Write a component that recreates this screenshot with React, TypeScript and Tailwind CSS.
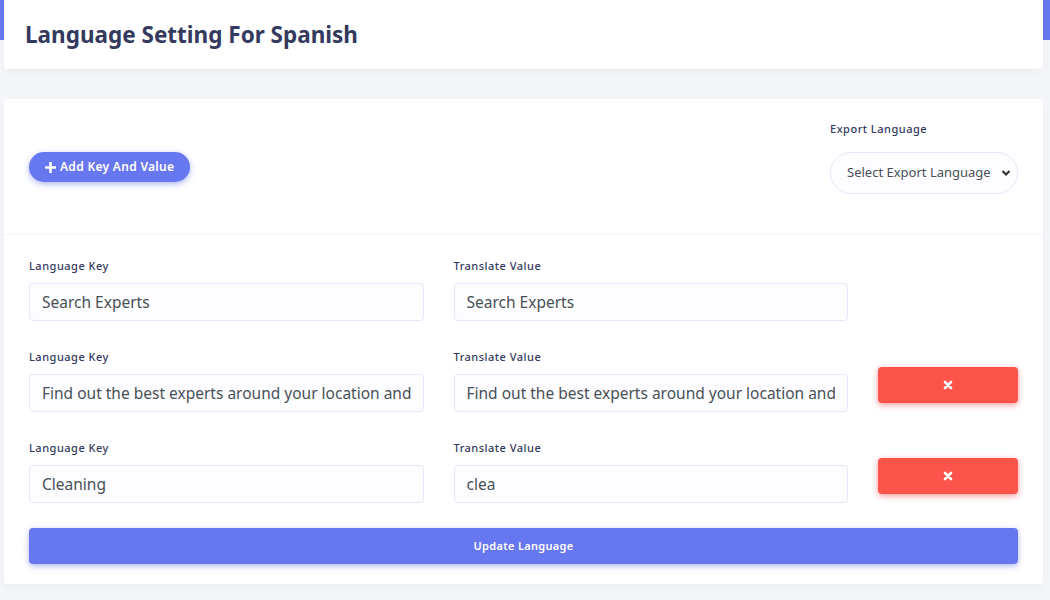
const ROWS = [
  { key: "Search Experts", value: "Search Experts", removable: false },
  {
    key: "Find out the best experts around your location and hire them",
    value: "Find out the best experts around your location and hire them",
    removable: true,
  },
  { key: "Cleaning", value: "clea", removable: true },
];

function TimesIcon() {
  return (
    <svg width="10" height="10" viewBox="0 0 10 10" aria-hidden>
      <path d="M2 2 L8 8 M8 2 L2 8" stroke="#fff" strokeWidth="2.6" strokeLinecap="round" />
    </svg>
  );
}

function PlusIcon() {
  return (
    <svg width="11" height="11" viewBox="0 0 11 11" aria-hidden>
      <path d="M5.5 1 V10 M1 5.5 H10" stroke="#fff" strokeWidth="2.6" strokeLinecap="round" />
    </svg>
  );
}

function Field({ label, value }: { label: string; value: string }) {
  return (
    <div className="flex min-w-0 flex-col">
      <label className="mb-[9px] text-[11px] font-medium leading-[16px] tracking-[0.5px] text-[#34395e]">{label}</label>
      <input
        readOnly
        value={value}
        className="h-[38px] w-full rounded-[4px] border border-[#e4e6fc] bg-[#fdfdff] px-[12px] text-[15.5px] text-[#495057] outline-none"
      />
    </div>
  );
}

export default function App() {
  return (
    <div className="min-h-[600px] bg-[linear-gradient(#6777ef_0_40px,#f4f5f9_40px)] pl-[4px] pr-[7px] pb-[16px] font-['Noto_Sans',sans-serif]">
      <div className="flex h-[69px] items-center rounded-b-[3px] bg-white px-[21px] shadow-[0_4px_8px_rgba(0,0,0,0.03)]">
        <h1 className="m-0 text-[22.5px] font-bold text-[#34395e]">Language Setting For Spanish</h1>
      </div>

      <div className="mt-[30px] rounded-[3px] bg-white shadow-[0_4px_8px_rgba(0,0,0,0.03)]">
        <div className="flex items-start justify-between border-b border-[#f5f5f5] px-[25px] pb-[40px] pt-[22px]">
          <button className="mt-[31px] inline-flex h-[30px] items-center gap-[4px] rounded-full bg-[#6777ef] px-[16px] text-[12px] font-semibold tracking-[0.3px] text-white shadow-[0_2px_6px_#acb5f6]">
            <PlusIcon />
            Add Key And Value
          </button>
          <div className="flex w-[188px] flex-col">
            <span className="mb-[15px] text-[11px] font-medium leading-[16px] tracking-[0.5px] text-[#34395e]">Export Language</span>
            <div className="flex h-[42px] items-center justify-between rounded-full border border-[#e4e6fc] bg-[#fdfdff] pl-[16px] pr-[6px] text-[13px] text-[#495057]">
              <span>Select Export Language</span>
              <svg width="10" height="8" viewBox="0 0 10 8" aria-hidden>
                <path d="M1.5 2 L5 5.5 L8.5 2" stroke="#333" strokeWidth="2.2" fill="none" />
              </svg>
            </div>
          </div>
        </div>

        <div className="px-[25px] pb-[20px] pt-[23px]">
          <div className="flex flex-col gap-[28px]">
            {ROWS.map((row, i) => (
              <div key={i} className="grid grid-cols-[1fr_1fr_140px] gap-x-[30px]">
                <Field label="Language Key" value={row.key} />
                <Field label="Translate Value" value={row.value} />
                <div>
                  {row.removable && (
                    <button className="mt-[18px] flex h-[36px] w-full items-center justify-center rounded-[4px] bg-[#fc544b] shadow-[0_2px_6px_#fd9b96]">
                      <TimesIcon />
                    </button>
                  )}
                </div>
              </div>
            ))}
          </div>
          <button className="mt-[25px] flex h-[36px] w-full items-center justify-center rounded-[4px] bg-[#6777ef] text-[11px] font-semibold tracking-[0.3px] text-white shadow-[0_2px_6px_#acb5f6]">
            Update Language
          </button>
        </div>
      </div>
    </div>
  );
}
